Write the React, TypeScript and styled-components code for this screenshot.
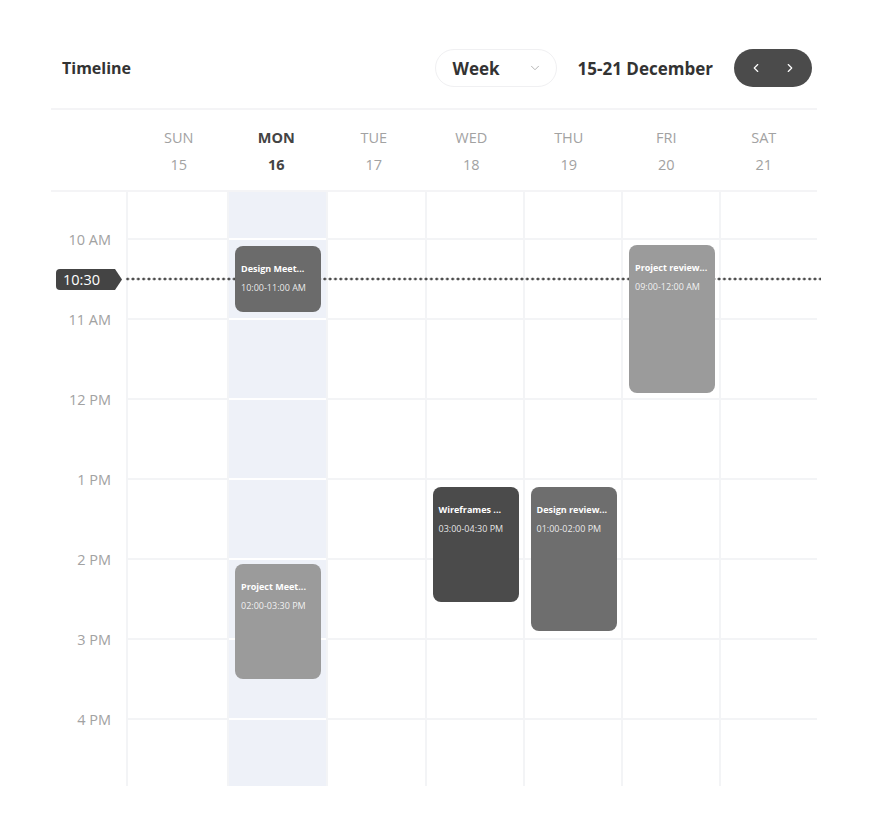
import * as React from 'react';
import styled, { createGlobalStyle } from 'styled-components';
import { ChevronDown, ChevronLeft, ChevronRight } from 'lucide-react';

const GlobalStyle = createGlobalStyle`
  body {
    margin: 0;
    background: #fff;
    font-family: 'Open Sans', 'Lato', sans-serif;
    color: #333;
  }
`

const Page = styled.div`
  width: 766px;
  padding: 49px 53px 0 51px;
`
const Header = styled.header`
  display: flex;
  align-items: center;
  padding: 0 5px 21px 11px;
  border-bottom: 2px solid #f4f4f6;
`
const Title = styled.h1`
  flex: 1;
  margin: 0;
  font-size: 16px;
  font-weight: 700;
  color: #333;
`
const WeekSelect = styled.button`
  display: flex;
  align-items: center;
  justify-content: space-between;
  box-sizing: border-box;
  width: 122px;
  height: 38px;
  padding: 0 14px 0 17px;
  background: #fff;
  border: 1px solid #f0f0f2;
  border-radius: 19px;
  font-family: inherit;
  font-size: 17px;
  font-weight: 700;
  color: #333;
`
const DateLabel = styled.div`
  margin: 0 21px;
  font-size: 17px;
  font-weight: 700;
  color: #333;
`
const NavGroup = styled.div`
  display: flex;
  align-items: center;
  justify-content: space-between;
  box-sizing: border-box;
  width: 78px;
  height: 38px;
  padding: 0 15px;
  background: #4b4b4b;
  border-radius: 19px;
  color: #fff;
`
const DayHeader = styled.div`
  display: grid;
  grid-template-columns: 79px repeat(7, 97.5px);
  padding: 18px 0 15px;
  border-bottom: 2px solid #f4f4f6;
`
const DayCell = styled.div<{ $active?: boolean }>`
  text-align: center;
  color: ${p => (p.$active ? '#444' : '#a2a2a2')};
  font-weight: ${p => (p.$active ? 700 : 400)};
`
const DayName = styled.div`
  font-size: 14.5px;
  line-height: 20px;
`
const DayNum = styled.div`
  margin-top: 7px;
  font-size: 14.5px;
  line-height: 20px;
`
const Body = styled.div`
  position: relative;
  display: flex;
  height: 594px;
`
const Gutter = styled.div`
  box-sizing: border-box;
  width: 77px;
  padding: 38px 15px 0 0;
  border-right: 2px solid #f3f4f6;
`
const TimeLabel = styled.div`
  height: 80px;
  line-height: 20px;
  text-align: right;
  font-size: 14.5px;
  color: #a2a2a2;
`
const Column = styled.div<{ $width: number; $active?: boolean; $last?: boolean }>`
  position: relative;
  display: flex;
  flex-direction: column;
  box-sizing: border-box;
  width: ${p => p.$width}px;
  overflow: hidden;
  background: ${p => (p.$active ? '#eef1f8' : '#fff')};
  border-right: ${p => (p.$last ? 'none' : '2px solid #f3f4f6')};
`
const TopSpace = styled.div`
  flex: none;
  height: 46px;
`
const HourSlot = styled.div<{ $active?: boolean }>`
  flex: none;
  box-sizing: border-box;
  height: 80px;
  border-top: 2px solid ${p => (p.$active ? '#ffffff' : '#f3f4f6')};
`
const NowBadge = styled.div`
  position: absolute;
  left: 5px;
  top: 77px;
  z-index: 1;
  box-sizing: border-box;
  width: 66px;
  height: 21px;
  padding-left: 7px;
  background: #444;
  border-radius: 4px 0 0 4px;
  clip-path: polygon(0 0, 59px 0, 66px 50%, 59px 100%, 0 100%);
  color: #fff;
  font-size: 14.5px;
  line-height: 21px;
`
const NowLine = styled.div`
  position: absolute;
  left: 74px;
  right: -4px;
  top: 85px;
  z-index: 1;
  height: 4px;
  background-image: radial-gradient(circle, #4a4a4a 1.2px, transparent 1.7px);
  background-size: 5.33px 4px;
  background-repeat: repeat-x;
`
const EventCard = styled.div<{ $color: string }>`
  position: absolute;
  left: 6px;
  z-index: 2;
  box-sizing: border-box;
  width: 86px;
  padding: 17px 6px 0;
  background: ${p => p.$color};
  border-radius: 8px;
  color: #fff;
  white-space: nowrap;
  overflow: hidden;
`
const EventTitle = styled.div`
  font-size: 9px;
  font-weight: 700;
  line-height: 12px;
`
const EventTime = styled.div`
  margin-top: 7px;
  font-size: 9px;
  line-height: 12px;
  color: rgba(255, 255, 255, 0.88);
`

type CalEvent = { title: string; time: string; top: number; height: number; color: string };

const days = [
  { name: 'SUN', num: 15, width: 101 },
  { name: 'MON', num: 16, width: 99, active: true },
  { name: 'TUE', num: 17, width: 98.5 },
  { name: 'WED', num: 18, width: 98 },
  { name: 'THU', num: 19, width: 98.5 },
  { name: 'FRI', num: 20, width: 98 },
  { name: 'SAT', num: 21, width: 96 },
];

const hours = ['10 AM', '11 AM', '12 PM', '1 PM', '2 PM', '3 PM', '4 PM'];

const events: Record<number, CalEvent[]> = {
  1: [
    { title: 'Design Meet...', time: '10:00-11:00 AM', top: 54, height: 66, color: '#6b6b6b' },
    { title: 'Project Meet...', time: '02:00-03:30 PM', top: 372, height: 115, color: '#9b9b9b' },
  ],
  3: [{ title: 'Wireframes ...', time: '03:00-04:30 PM', top: 295, height: 115, color: '#4b4b4b' }],
  4: [{ title: 'Design review...', time: '01:00-02:00 PM', top: 295, height: 144, color: '#6e6e6e' }],
  5: [{ title: 'Project review...', time: '09:00-12:00 AM', top: 53, height: 148, color: '#9b9b9b' }],
};

export default function App() {
  return (
    <Page>
      <GlobalStyle />
      <Header>
        <Title>Timeline</Title>
        <WeekSelect>
          Week
          <ChevronDown size={14} strokeWidth={1.5} color="#aaa" />
        </WeekSelect>
        <DateLabel>15-21 December</DateLabel>
        <NavGroup>
          <ChevronLeft size={14} strokeWidth={2} />
          <ChevronRight size={14} strokeWidth={2} />
        </NavGroup>
      </Header>
      <DayHeader>
        <div />
        {days.map(d => (
          <DayCell key={d.name} $active={d.active}>
            <DayName>{d.name}</DayName>
            <DayNum>{d.num}</DayNum>
          </DayCell>
        ))}
      </DayHeader>
      <Body>
        <Gutter>
          {hours.map(h => (
            <TimeLabel key={h}>{h}</TimeLabel>
          ))}
        </Gutter>
        {days.map((d, i) => (
          <Column key={d.name} $width={d.width} $active={d.active} $last={i === days.length - 1}>
            <TopSpace />
            {hours.map(h => (
              <HourSlot key={h} $active={d.active} />
            ))}
            {(events[i] || []).map(e => (
              <EventCard key={e.title} $color={e.color} style={{ top: e.top, height: e.height }}>
                <EventTitle>{e.title}</EventTitle>
                <EventTime>{e.time}</EventTime>
              </EventCard>
            ))}
          </Column>
        ))}
        <NowLine />
        <NowBadge>10:30</NowBadge>
      </Body>
    </Page>
  );
}
